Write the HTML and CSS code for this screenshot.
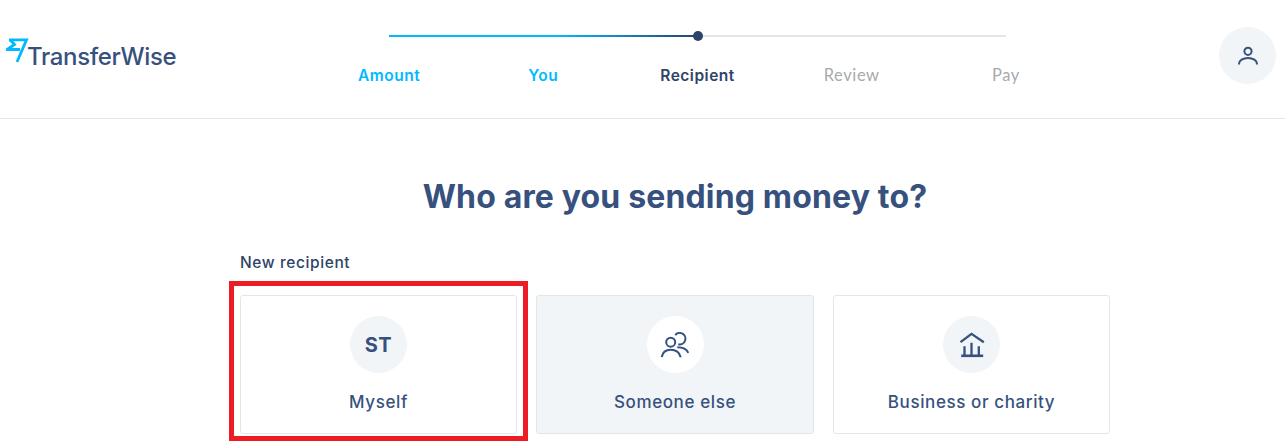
FILE: index.html
```html
<!DOCTYPE html>
<html lang="en">
<head>
<meta charset="utf-8">
<title>TransferWise</title>
<link rel="stylesheet" href="styles.css">
</head>
<body>
<header class="topbar">
  <div class="logo">
    <svg class="logo-mark" width="24" height="30" viewBox="0 0 24 30" fill="none" stroke="#00b9ff" stroke-width="2.800"><path d="M3 1.800H20.500L11 24"/><path d="M4 1.800L8.500 6.500L1 11.500H14"/></svg>
    <span class="logo-text">TransferWise</span>
  </div>
  <nav class="steps">
    <div class="track"><div class="track-done"></div><div class="track-dot"></div></div>
    <ol class="step-labels">
      <li class="step done">Amount</li>
      <li class="step done">You</li>
      <li class="step current">Recipient</li>
      <li class="step todo">Review</li>
      <li class="step todo">Pay</li>
    </ol>
  </nav>
  <button class="avatar" aria-label="Account">
    <svg width="24" height="24" viewBox="0 0 24 24" fill="none" stroke="#37517e" stroke-width="2"><circle cx="12" cy="7.300" r="3.600"/><path d="M3 20.500V20C3 16.500 7 14 12 14S21 16.500 21 20V20.500"/></svg>
  </button>
</header>
<main class="content">
  <h1 class="title">Who are you sending money to?</h1>
  <h2 class="section-label">New recipient</h2>
  <div class="cards">
    <div class="card-highlight">
      <a class="card">
        <span class="badge">ST</span>
        <span class="card-name">Myself</span>
      </a>
    </div>
    <a class="card card-hover">
      <span class="badge badge-white">
        <svg width="32" height="32" viewBox="0 0 32 32" fill="none" stroke="#37517e" stroke-width="2"><circle cx="11.700" cy="13.200" r="4.500"/><path d="M2.700 28.200C3.500 23.500 7 20.800 11.700 20.800S20.500 23.500 21.700 28.200"/><path d="M16.200 6.200A5.700 5.700 0 1 1 19.300 15.200"/><path d="M18.300 18.200C23 18.200 27.500 19.500 29.300 23.800"/></svg>
      </span>
      <span class="card-name">Someone else</span>
    </a>
    <a class="card">
      <span class="badge">
        <svg width="30" height="30" viewBox="0 0 30 30" fill="none" stroke="#37517e" stroke-width="2.300"><path d="M3.500 12.200L14.500 3.800L26.800 12.200"/><path d="M7.500 16.200V25M14.500 12.800V25M21.800 16.200V25"/><path d="M4.200 25.800H26.200" stroke-width="2.600"/></svg>
      </span>
      <span class="card-name">Business or charity</span>
    </a>
  </div>
</main>
</body>
</html>
```
FILE: styles.css
```css
* { box-sizing: border-box; }
html, body { margin: 0; padding: 0; }
body {
  background: #fff;
  color: #37517e;
  font-family: "Inter", "Liberation Sans", sans-serif;
  height: 442px;
  overflow: hidden;
}
.topbar {
  height: 119px;
  border-bottom: 1px solid #e2e6e8;
  display: flex;
  align-items: flex-start;
  padding: 0 9px 0 6px;
}
.logo {
  display: flex;
  align-items: flex-end;
  width: 171px;
  margin-top: 38px;
  height: 30px;
}
.logo-mark { flex: none; margin-right: -3px; }
.logo-text {
  font-size: 24px;
  font-weight: 500;
  letter-spacing: -0.35px;
  color: #37517e;
  line-height: 28px;
  margin-bottom: -3px;
}
.steps {
  width: 771px;
  margin-top: 30px;
  margin-left: 135px;
  display: flex;
  flex-direction: column;
}
.track {
  position: relative;
  height: 2px;
  margin: 5px 77px 0;
  background: #e2e6e8;
}
.track-done {
  width: 50%;
  height: 100%;
  background: linear-gradient(90deg, #00b9ff 0%, #00b9ff 55%, #2e4369 100%);
}
.track-dot {
  position: absolute;
  left: 50%;
  top: -4px;
  width: 10px;
  height: 10px;
  margin-left: -5px;
  border-radius: 50%;
  background: #2e4369;
}
.step-labels {
  list-style: none;
  margin: 28px 0 0;
  padding: 0;
  display: grid;
  grid-template-columns: repeat(5, 1fr);
}
.step {
  text-align: center;
  font-size: 15.500px;
  line-height: 22px;
  font-weight: 600;
  letter-spacing: 0.5px;
}
.done { color: #00b9ff; }
.current { color: #2e4369; }
.todo {
  color: #a8aaac;
  font-family: "Lato", "Liberation Sans", sans-serif;
  font-size: 16.500px;
  font-weight: 400;
  letter-spacing: 0.6px;
  transform: translateY(-1px);
}
.avatar {
  width: 57px;
  height: 57px;
  margin-top: 27px;
  margin-left: 136px;
  border: 0;
  padding: 0;
  border-radius: 50%;
  background: #f2f5f7;
  display: flex;
  align-items: center;
  justify-content: center;
}
.content {
  width: 870px;
  margin: 0 0 0 240px;
}
.title {
  margin: 56px 0 0;
  text-align: center;
  font-size: 32px;
  line-height: 44px;
  font-weight: 700;
  letter-spacing: 0.15px;
  color: #37517e;
}
.section-label {
  margin: 33px 0 0;
  font-size: 15.500px;
  line-height: 22px;
  font-weight: 500;
  letter-spacing: 0.6px;
  color: #2e4369;
}
.cards {
  margin-top: 21px;
  display: grid;
  grid-template-columns: 277px 278px 277px;
  gap: 19px;
}
.card-highlight { position: relative; }
.card-highlight::after {
  content: "";
  position: absolute;
  left: -11px;
  right: -11px;
  top: -14px;
  bottom: -7px;
  border: 5px solid #ed1c24;
}
.card {
  display: flex;
  flex-direction: column;
  align-items: center;
  height: 139px;
  padding-top: 20px;
  background: #fff;
  border: 1px solid #e2e6e8;
  border-radius: 3px;
}
.card-hover { background: #f2f5f7; }
.badge {
  width: 57px;
  height: 57px;
  border-radius: 50%;
  background: #f2f5f7;
  display: flex;
  align-items: center;
  justify-content: center;
  font-size: 20px;
  font-weight: 700;
  letter-spacing: 0.5px;
  color: #37517e;
}
.badge-white { background: #fff; }
.card-name {
  margin-top: 17px;
  font-size: 17px;
  line-height: 24px;
  font-weight: 500;
  letter-spacing: 0.6px;
  color: #37517e;
}
```
